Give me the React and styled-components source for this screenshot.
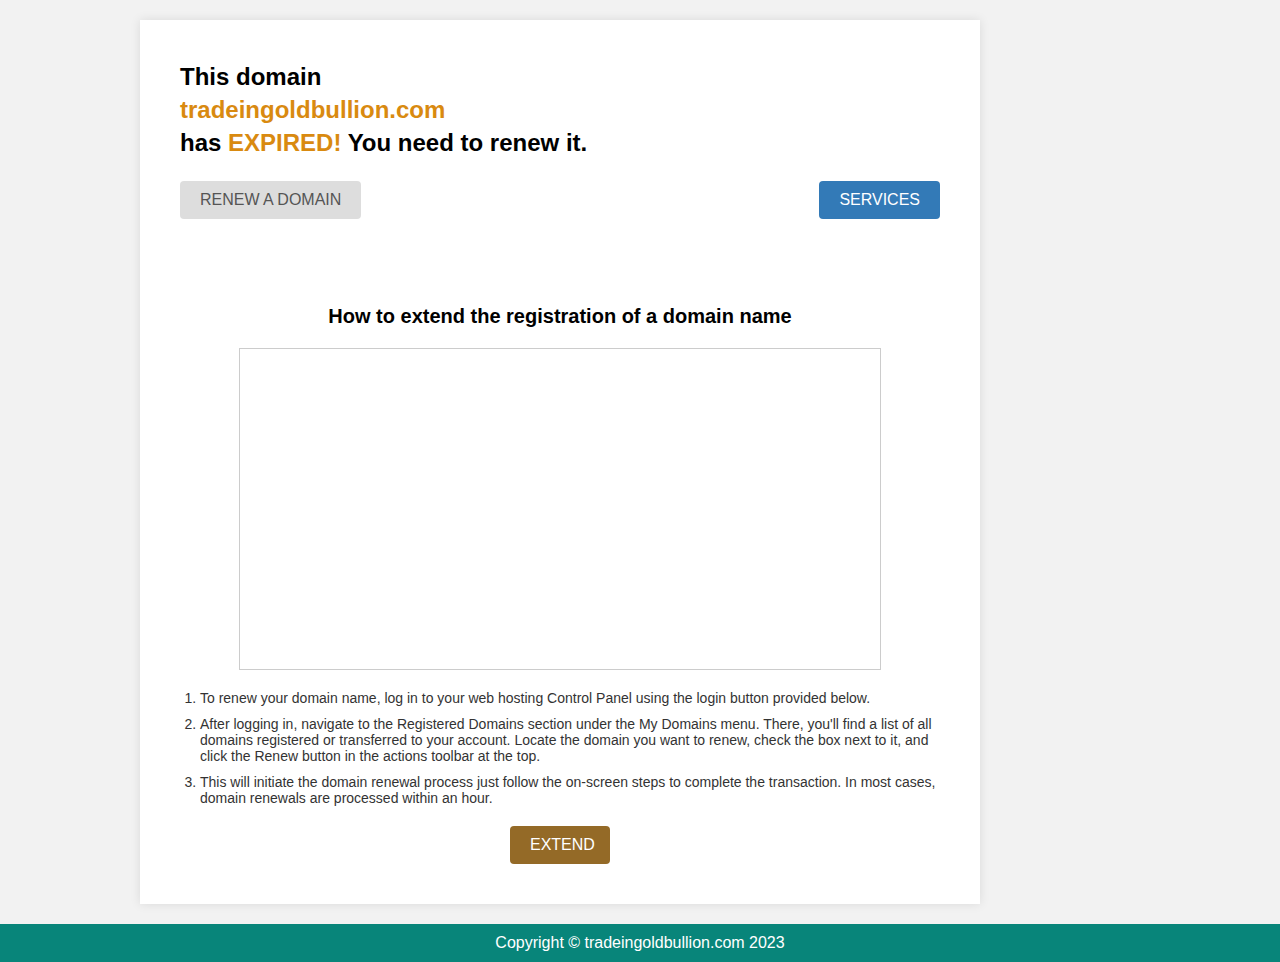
import React from 'react'
import styled, { createGlobalStyle } from 'styled-components'

const GlobalStyle = createGlobalStyle`
  body {
    margin: 0;
    background: #f2f2f2;
    font-family: "Liberation Sans", Arial, sans-serif;
  }
`

const Page = styled.div`
  min-height: 962px;
  display: flex;
  flex-direction: column;
`

const Card = styled.div`
  width: 760px;
  margin: 20px 0 20px 140px;
  padding: 40px;
  background: #fff;
  box-shadow: 0 0 10px rgba(0, 0, 0, 0.1);
`

const Headline = styled.h1`
  margin: 0;
  font-size: 24px;
  line-height: 33px;
  font-weight: 700;
  color: #000;
`

const Accent = styled.span`
  color: #d98a10;
`

const ButtonRow = styled.div`
  display: flex;
  justify-content: space-between;
  margin-top: 22px;
`

const Button = styled.a`
  display: inline-flex;
  align-items: center;
  box-sizing: border-box;
  height: 38px;
  width: ${p => p.w || 'auto'};
  padding: 0 20px;
  border-radius: 4px;
  font-size: 16px;
  text-decoration: none;
  background: ${p => p.bg};
  color: ${p => p.fg};
`

const Guide = styled.div`
  margin-top: 86px;
  display: flex;
  flex-direction: column;
  align-items: center;
`

const GuideTitle = styled.h3`
  margin: 0 0 21px;
  font-size: 20px;
  line-height: 22px;
  font-weight: 700;
  color: #000;
`

const VideoBox = styled.div`
  width: 640px;
  height: 320px;
  border: 1px solid #ccc;
  background: #fff;
`

const Steps = styled.ol`
  align-self: stretch;
  margin: 20px 0 0;
  padding-left: 20px;
  font-size: 14px;
  line-height: 16px;
  color: #333;

  li {
    margin-bottom: 10px;
  }
`

const ExtendWrap = styled.div`
  margin-top: 10px;
`

const Footer = styled.footer`
  height: 38px;
  display: flex;
  align-items: center;
  justify-content: center;
  background: #08857a;
  color: #fff;
  font-size: 16px;
`

export default function App() {
  return (
    <>
      <GlobalStyle />
      <Page>
        <Card>
          <Headline>
            This domain
            <br />
            <Accent>tradeingoldbullion.com</Accent>
            <br />
            has <Accent>EXPIRED!</Accent> You need to renew it.
          </Headline>
          <ButtonRow>
            <Button bg="#dddddd" fg="#555555">RENEW A DOMAIN</Button>
            <Button bg="#337ab7" fg="#ffffff">SERVICES</Button>
          </ButtonRow>
          <Guide>
            <GuideTitle>How to extend the registration of a domain name</GuideTitle>
            <VideoBox />
            <Steps>
              <li>To renew your domain name, log in to your web hosting Control Panel using the login button provided below.</li>
              <li>After logging in, navigate to the Registered Domains section under the My Domains menu. There, you'll find a list of all domains registered or transferred to your account. Locate the domain you want to renew, check the box next to it, and click the Renew button in the actions toolbar at the top.</li>
              <li>This will initiate the domain renewal process just follow the on-screen steps to complete the transaction. In most cases, domain renewals are processed within an hour.</li>
            </Steps>
            <ExtendWrap>
              <Button w="100px" bg="#946a27" fg="#ffffff">EXTEND</Button>
            </ExtendWrap>
          </Guide>
        </Card>
        <Footer>Copyright © tradeingoldbullion.com 2023</Footer>
      </Page>
    </>
  )
}
